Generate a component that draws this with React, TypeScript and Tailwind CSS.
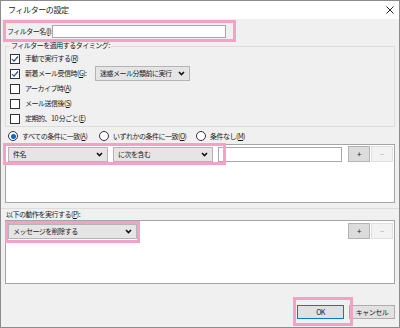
import React from 'react'

const Chevron = () => (
  <svg width="7" height="5" viewBox="0 0 7 5" className="shrink-0">
    <polyline points="1,1 3.5,3.5 6,1" fill="none" stroke="#111" strokeWidth="1.6" />
  </svg>
)

function Checkbox({ checked, label }: { checked?: boolean; label: React.ReactNode }) {
  return (
    <div className="h-[15px] flex items-center">
      <div className="w-[10px] h-[10px] bg-white border border-[#333] flex items-center justify-center shrink-0">
        {checked && (
          <svg width="8" height="8" viewBox="0 0 8 8">
            <polyline points="1,4.2 3,6.2 7,1.5" fill="none" stroke="#1f4f9a" strokeWidth="1.2" />
          </svg>
        )}
      </div>
      <span className="ml-[5px] whitespace-nowrap">{label}</span>
    </div>
  )
}

function Select({ label, className }: { label: string; className: string }) {
  return (
    <div className={`h-[15px] bg-[#e5e5e5] border border-[#b4b4b4] flex items-center justify-between pl-[4px] pr-[4px] shrink-0 ${className}`}>
      <span className="whitespace-nowrap">{label}</span>
      <Chevron />
    </div>
  )
}

function Radio({ checked, label, className }: { checked?: boolean; label: React.ReactNode; className?: string }) {
  return (
    <div className={`flex items-center shrink-0 ${className ?? ''}`}>
      <div className="w-[10px] h-[10px] rounded-full bg-white border border-[#333] flex items-center justify-center shrink-0">
        {checked && <div className="w-[5px] h-[5px] rounded-full bg-[#0a64c8]" />}
      </div>
      <span className="ml-[4px] whitespace-nowrap">{label}</span>
    </div>
  )
}

function PlusMinus() {
  return (
    <div className="flex items-start ml-auto shrink-0">
      <div className="w-[22px] h-[16px] bg-[#dcdcdc] border border-[#b4b4b4] flex items-center justify-center text-[8px]">+</div>
      <div className="ml-[1px] w-[22px] h-[16px] bg-[#f2f2f2] border border-[#e0e0e0] flex items-center justify-center text-[8px] text-[#b0b0b0]">−</div>
    </div>
  )
}

const Key = ({ k }: { k: string }) => (
  <>(<span className="underline">{k}</span>)</>
)

export default function App() {
  return (
    <div className="relative w-[400px] h-[328px] overflow-hidden bg-[#f0f0f0] border border-[#8c8c8c] flex flex-col font-['Noto_Sans_CJK_JP',sans-serif] text-[7px] tracking-[-0.5px] leading-none text-[#1a1a1a]">
      {/* title bar */}
      <div className="h-[18px] bg-white flex items-center justify-between pl-[7px] pr-[5px] shrink-0">
        <span className="text-[8px] tracking-[-0.4px]">フィルターの設定</span>
        <svg width="8" height="8" viewBox="0 0 8 8">
          <path d="M0.5 0.5 L7.5 7.5 M7.5 0.5 L0.5 7.5" stroke="#222" strokeWidth="1" />
        </svg>
      </div>

      <div className="flex flex-col flex-1 px-[4px]">
        {/* filter name */}
        <div className="mt-[6px] h-[13px] flex items-center pl-[2px]">
          <span className="w-[45px] shrink-0 whitespace-nowrap">フィルター名<Key k="I" />:</span>
          <div className="w-[174px] h-[13px] bg-white border border-[#a8a8a8]" />
        </div>

        {/* timing group */}
        <div className="mt-[8px] border border-[#dcdcdc] pl-[4px]">
          <div className="h-0 flex items-center">
            <span className="-mt-[3px] bg-[#f0f0f0] px-[1px]">フィルターを適用するタイミング:</span>
          </div>
          <div className="pt-[4px]">
            <Checkbox checked label={<>手動で実行する<Key k="R" /></>} />
            <div className="h-[15px] flex items-center">
              <div className="w-[85px] shrink-0">
                <Checkbox checked label={<>新着メール受信時<Key k="G" />:</>} />
              </div>
              <Select label="迷惑メール分類前に実行" className="w-[95px]" />
            </div>
            <Checkbox label={<>アーカイブ時<Key k="A" /></>} />
            <Checkbox label={<>メール送信後<Key k="S" /></>} />
            <Checkbox label={<>定期的、10 分ごと<Key k="E" /></>} />
          </div>
        </div>

        {/* match mode */}
        <div className="mt-[2px] h-[14px] flex items-center pl-[3px]">
          <Radio checked label={<>すべての条件に一致<Key k="A" /></>} className="w-[91px]" />
          <Radio label={<>いずれかの条件に一致<Key k="O" /></>} className="w-[97px]" />
          <Radio label={<>条件なし<Key k="M" /></>} />
        </div>

        {/* conditions */}
        <div className="mt-[1px] h-[59px] bg-white border border-[#a5a5a5] flex items-start pt-[1px] pl-[2px] pr-[1px]">
          <Select label="件名" className="mt-[1px] w-[100px]" />
          <Select label="に次を含む" className="mt-[1px] ml-[5px] w-[100px]" />
          <div className="mt-[1px] ml-[5px] w-[124px] h-[15px] bg-white border border-[#a8a8a8] shrink-0" />
          <PlusMinus />
        </div>

        {/* actions */}
        <div className="mt-[5px] -mx-[4px] px-[4px] border-t border-[#dcdcdc] flex flex-col">
          <div className="h-[11px] flex items-center pl-[1px]">
            <span>以下の動作を実行する<Key k="P" />:</span>
          </div>
          <div className="h-[64px] bg-white border border-[#a5a5a5] flex items-start pt-[2px] pl-[2px] pr-[1px]">
            <Select label="メッセージを削除する" className="mt-[1px] w-[129px]" />
            <PlusMinus />
          </div>
        </div>

        {/* buttons */}
        <div className="flex-1 flex items-end justify-end pb-[8px]">
          <div className="w-[47px] h-[14px] bg-[#e1e1e1] border border-[#0078d7] flex items-center justify-center">OK</div>
          <div className="ml-[5px] w-[46px] h-[14px] bg-[#e1e1e1] border border-[#adadad] flex items-center justify-center">キャンセル</div>
        </div>
      </div>

      {/* pink highlight annotations */}
      <div className="absolute left-[2px] top-[19px] w-[233px] h-[22px] border-[3px] border-[#f2a2c4]" />
      <div className="absolute left-[2px] top-[142px] w-[223px] h-[22px] border-[3px] border-[#f2a2c4]" />
      <div className="absolute left-[4px] top-[220px] w-[135px] h-[22px] border-[3px] border-[#f2a2c4]" />
      <div className="absolute left-[292px] top-[296px] w-[60px] h-[29px] border-[3px] border-[#f2a2c4]" />
    </div>
  )
}
